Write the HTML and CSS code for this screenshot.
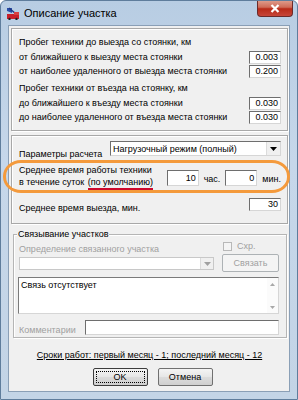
FILE: index.html
```html
<!DOCTYPE html>
<html lang="ru">
<head>
    <meta charset="UTF-8">
    <title>Описание участка</title>
    <link rel="stylesheet" href="styles.css">
</head>
<body>
    <div class="window">
        <div class="titlebar">
            <svg class="app-icon" width="14" height="13" viewBox="0 0 14 13">
                <path d="M1 1 L6 1 L6 6 L1 4 Z" fill="#2a4fa8"/>
                <path d="M3 1 L10 7" stroke="#1d3580" stroke-width="1.5"/>
                <rect x="1" y="7" width="12" height="5" fill="#c8202a"/>
                <rect x="8" y="5" width="5" height="3" fill="#d84040"/>
                <circle cx="3.5" cy="12" r="1.2" fill="#222"/>
                <circle cx="10.5" cy="12" r="1.2" fill="#222"/>
            </svg>
            <span class="title">Описание участка</span>
            <div class="close">
                <svg width="10" height="9" viewBox="0 0 10 9">
                    <path d="M1.5 1 L8.5 8 M8.5 1 L1.5 8" stroke="#fff" stroke-width="2.2"/>
                </svg>
            </div>
        </div>

        <div class="client">
            <div class="panel mileage">
                <div class="row head">Пробег техники до выезда со стоянки, км</div>
                <div class="row"><span>от ближайшего к выезду места стоянки</span><span class="field">0.003</span></div>
                <div class="row"><span>от наиболее удаленного от выезда места стоянки</span><span class="field">0.200</span></div>
                <div class="row head second">Пробег техники от въезда на стоянку, км</div>
                <div class="row"><span>до ближайшего к въезду места стоянки</span><span class="field">0.030</span></div>
                <div class="row"><span>до наиболее удаленного от въезда места стоянки</span><span class="field">0.030</span></div>
            </div>

            <div class="panel params">
                <div class="row calc">
                    <span class="calc-label">Параметры расчета</span>
                    <div class="select">
                        <span>Нагрузочный режим (полный)</span>
                        <span class="drop"><svg width="7" height="4" viewBox="0 0 7 4"><path d="M0 0 H7 L3.5 4 Z" fill="#000"/></svg></span>
                    </div>
                </div>
                <div class="row worktime">
                    <div class="wt-label">
                        <div>Среднее время работы техники</div>
                        <div class="wt-second">в течение суток <span class="marked">(по умолчанию)</span></div>
                    </div>
                    <span class="field short">10</span>
                    <span class="unit">час.</span>
                    <span class="field short">0</span>
                    <span class="unit">мин.</span>
                </div>
                <div class="row depart">
                    <span>Среднее время выезда, мин.</span>
                    <span class="field">30</span>
                </div>
            </div>

            <div class="group">
                <div class="legend">Связывание участков</div>
                <div class="link-top">
                    <div class="link-left">
                        <span class="disabled">Определение связанного участка</span>
                        <div class="combo">
                            <span class="drop dis"><svg width="7" height="4" viewBox="0 0 7 4"><path d="M0 0 H7 L3.5 4 Z" fill="#a0a0a0"/></svg></span>
                        </div>
                    </div>
                    <div class="link-right">
                        <label class="check disabled"><span class="box"></span>Схр.</label>
                        <span class="btn dis-btn">Связать</span>
                    </div>
                </div>
                <div class="listbox">
                    <span>Связь отсутствует</span>
                    <div class="scroll">
                        <svg width="5" height="3" viewBox="0 0 5 3"><path d="M0 3 H5 L2.5 0 Z" fill="#a8a8a8"/></svg>
                        <svg width="5" height="3" viewBox="0 0 5 3"><path d="M0 0 H5 L2.5 3 Z" fill="#a8a8a8"/></svg>
                    </div>
                </div>
                <div class="row comment">
                    <span class="disabled">Комментарии</span>
                    <span class="field wide"></span>
                </div>
            </div>

            <div class="terms"><span>Сроки работ: первый месяц - 1; последний месяц - 12</span></div>

            <div class="buttons">
                <span class="btn ok"><span class="focus">OK</span></span>
                <span class="btn">Отмена</span>
            </div>
        </div>

        <div class="highlight"></div>
    </div>
</body>
</html>
```

FILE: styles.css
```css
body {
    margin: 0;
    font-family: "Liberation Sans", Arial, sans-serif;
    font-size: 9px;
    color: #000;
}
.window {
    position: relative;
    width: 298px;
    height: 400px;
    overflow: hidden;
    background: linear-gradient(to bottom, #b8cde3 0%, #c6d7ea 40%, #c3d4e6 100%);
    box-sizing: border-box;
    border: 1px solid #5f7d9c;
    border-radius: 6px 6px 0 0;
    padding: 0 7px 7px 7px;
}
.titlebar {
    height: 24px;
    display: flex;
    align-items: center;
    position: relative;
}
.app-icon {
    margin-left: -2px;
    margin-right: 4px;
}
.title {
    font-size: 11px;
    color: #000;
}
.close {
    position: absolute;
    right: -3px;
    top: -1px;
    width: 36px;
    height: 17px;
    border: 1px solid #6b2a2a;
    border-top: none;
    border-radius: 0 0 4px 4px;
    background: linear-gradient(to bottom, #e0a191 0%, #cf6b58 45%, #b82a18 55%, #c6463a 100%);
    box-sizing: border-box;
    display: flex;
    align-items: center;
    justify-content: center;
}
.client {
    background: #f0f0f0;
    border: 1px solid #8a9fb6;
    height: 367px;
    box-sizing: border-box;
    padding: 2px 1px 0 2px;
    display: flex;
    flex-direction: column;
}
.panel {
    border: 1px solid #a8a8a8;
    box-shadow: inset 1px 1px 0 #fff, 1px 1px 0 #fff;
    padding: 6px 6px 0 7px;
}
.row {
    display: flex;
    align-items: center;
    justify-content: space-between;
    height: 14px;
    white-space: nowrap;
}
.mileage {
    height: 103px;
    box-sizing: border-box;
}
.mileage .head {
    margin-bottom: 1px;
}
.mileage .second {
    margin-top: 3px;
    margin-bottom: 1px;
}
.field {
    display: inline-block;
    width: 32px;
    height: 13px;
    box-sizing: border-box;
    background: #fff;
    border: 1px solid;
    border-color: #6e6e6e #d6d6d6 #d6d6d6 #6e6e6e;
    text-align: right;
    padding-right: 2px;
    line-height: 11px;
}
.params {
    margin-top: 4px;
    height: 89px;
    box-sizing: border-box;
    padding-top: 5px;
}
.calc {
    height: 15px;
    align-items: flex-end;
}
.calc-label {
    line-height: 10px;
    margin-bottom: -3px;
}
.select {
    width: 171px;
    height: 15px;
    box-sizing: border-box;
    background: #fff;
    border: 1px solid;
    border-color: #6e6e6e #d6d6d6 #d6d6d6 #6e6e6e;
    display: flex;
    align-items: center;
    justify-content: space-between;
    padding-left: 2px;
}
.drop {
    width: 13px;
    height: 13px;
    background: #f0f0f0;
    border-left: 1px solid #dcdcdc;
    display: flex;
    align-items: center;
    justify-content: center;
}
.worktime {
    height: 30px;
    margin-top: 5px;
    justify-content: flex-start;
}
.wt-label {
    line-height: 12px;
    width: 148px;
    margin-top: 2px;
}
.marked {
    display: inline-block;
    line-height: 11px;
    border-bottom: 2px solid #cc0a2c;
    margin-left: 1px;
}
.field.short {
    height: 16px;
    line-height: 14px;
    margin-top: 3px;
}
.unit {
    margin: 5px 5px 0 5px;
}
.unit:last-child {
    margin-right: 0;
}
.depart {
    margin-top: 6px;
}
.depart span:first-child {
    margin-top: 8px;
}
.group {
    position: relative;
    margin: 10px 1px 0 2px;
    height: 104px;
    border: 1px solid #b5b5b5;
    box-shadow: inset 1px 1px 0 #fff, 1px 1px 0 #fff;
    padding: 6px 6px 0 5px;
    box-sizing: border-box;
}
.legend {
    position: absolute;
    top: -6px;
    left: 3px;
    background: #f0f0f0;
    padding: 0 1px;
}
.disabled {
    color: #a0a0a0;
}
.link-top {
    display: flex;
    justify-content: space-between;
}
.link-left {
    display: flex;
    flex-direction: column;
    gap: 3px;
    padding-top: 3px;
}
.combo {
    width: 195px;
    height: 13px;
    box-sizing: border-box;
    background: #fff;
    border: 1px solid #c8c8c8;
    display: flex;
    justify-content: flex-end;
}
.drop.dis {
    height: 11px;
    width: 12px;
}
.link-right {
    display: flex;
    flex-direction: column;
    align-items: flex-start;
    gap: 3px;
    padding-right: 1px;
}
.check {
    display: flex;
    align-items: center;
    gap: 5px;
    margin-left: 1px;
    height: 10px;
}
.box {
    width: 7px;
    height: 7px;
    border: 1px solid #b8b8b8;
    background: #f4f4f4;
}
.btn {
    display: inline-flex;
    align-items: center;
    justify-content: center;
    width: 55px;
    height: 18px;
    box-sizing: border-box;
    background: linear-gradient(to bottom, #f4f4f4 0%, #e6e6e6 50%, #dcdcdc 51%, #cfcfcf 100%);
    border: 1px solid #707070;
    border-radius: 2px;
}
.dis-btn {
    width: 57px;
    color: #a0a0a0;
    border-color: #adb2b5;
    background: #f4f4f4;
}
.listbox {
    margin-top: 5px;
    height: 37px;
    box-sizing: border-box;
    background: #fff;
    border: 1px solid;
    border-color: #7a7a7a #d6d6d6 #d6d6d6 #7a7a7a;
    display: flex;
    justify-content: space-between;
    padding-left: 2px;
    margin-right: 1px;
    margin-left: -1px;
}
.listbox span {
    margin-top: 2px;
}
.scroll {
    width: 11px;
    display: flex;
    flex-direction: column;
    justify-content: space-between;
    align-items: center;
    padding: 5px 0 4px;
    background: #fbfbfb;
}
.comment {
    margin-top: 6px;
    height: 15px;
    margin-right: 1px;
}
.comment span:first-child {
    margin-top: 4px;
}
.field.wide {
    width: 194px;
    height: 15px;
}
.terms {
    text-align: center;
    margin-top: 12px;
}
.terms span {
    text-decoration: underline;
}
.buttons {
    display: flex;
    justify-content: center;
    gap: 10px;
    margin-top: 8px;
    padding-left: 6px;
}
.ok {
    border-color: #3c3c3c;
    padding: 2px;
}
.focus {
    flex: 1;
    align-self: stretch;
    display: flex;
    align-items: center;
    justify-content: center;
    border: 1px dotted #000;
}
.highlight {
    position: absolute;
    left: 2px;
    top: 159px;
    width: 287px;
    height: 33px;
    box-sizing: border-box;
    border: 3px solid #f49a3c;
    border-radius: 18px / 16px;
    pointer-events: none;
}
```
